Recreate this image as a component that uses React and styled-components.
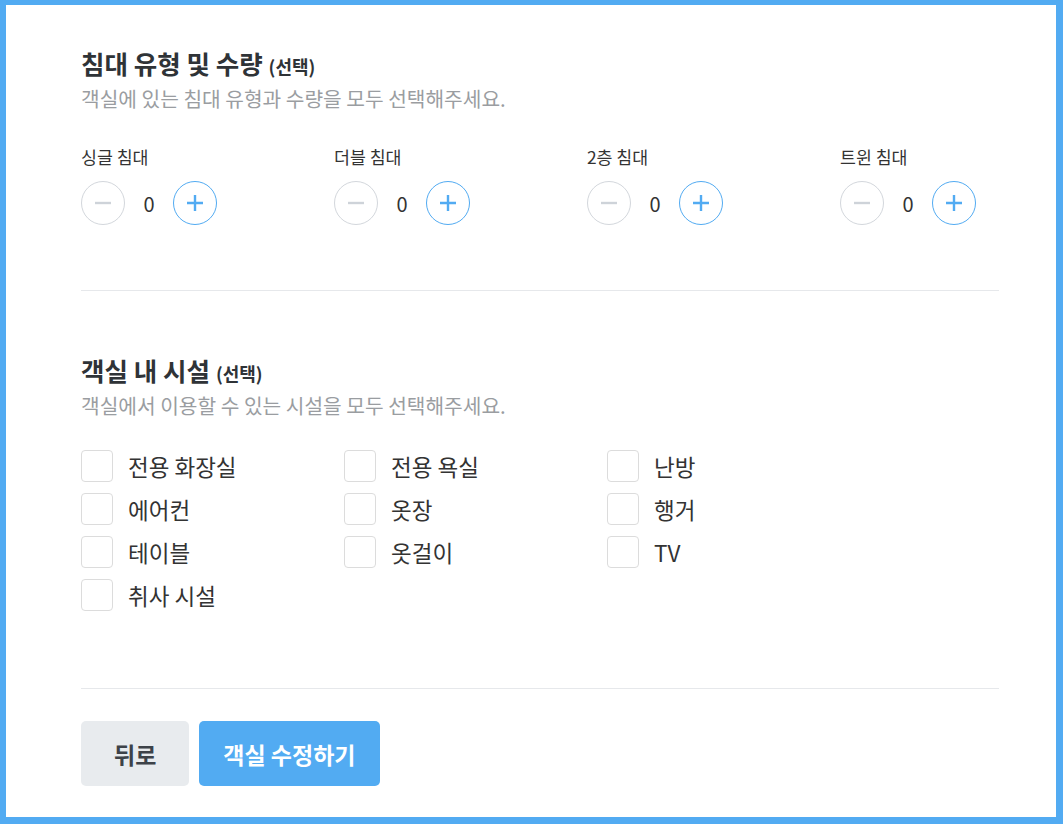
import React from "react"
import styled, { createGlobalStyle } from "styled-components"

const GlobalStyle = createGlobalStyle`
  html, body {
    margin: 0;
    padding: 0;
    background: #52abf2;
  }
  body {
    font-family: "Noto Sans CJK KR", "Noto Sans", sans-serif;
    color: #333;
  }
  * { box-sizing: border-box; }
`

const Frame = styled.div`
  width: 1063px;
  height: 824px;
  padding: 5px 7px 7px 6px;
`

const Card = styled.div`
  height: 100%;
  background: #fff;
  padding: 42px 57px 0 75px;
`

const Section = styled.section`
  display: flex;
  flex-direction: column;
`

const Title = styled.h2`
  margin: 0;
  font-size: 25.5px;
  line-height: 32px;
  font-weight: 700;
  color: #2f3337;
  & > small {
    font-size: 18px;
    font-weight: 700;
    margin-left: 6px;
  }
`

const Subtitle = styled.p`
  margin: 3px 0 0;
  font-size: 20.3px;
  line-height: 26px;
  color: #9a9da1;
`

const BedGrid = styled.div`
  display: grid;
  grid-template-columns: repeat(4, 253px);
  margin-top: 34px;
`

const BedItem = styled.div`
  display: flex;
  flex-direction: column;
  gap: 12px;
`

const BedLabel = styled.div`
  font-size: 17.3px;
  line-height: 24px;
  color: #333;
`

const Counter = styled.div`
  display: flex;
  align-items: center;
`

const RoundButton = styled.button`
  width: 44px;
  height: 44px;
  border-radius: 50%;
  padding: 0;
  background: #fff;
  border: 1px solid ${p => (p.$active ? "#52abf2" : "#d3d7dc")};
  color: ${p => (p.$active ? "#52abf2" : "#ced3d9")};
  display: flex;
  align-items: center;
  justify-content: center;
`

const Count = styled.span`
  width: 48px;
  text-align: center;
  font-size: 20px;
  color: #333;
`

const Divider = styled.hr`
  border: 0;
  border-top: 1px solid #e6e8eb;
  width: 918px;
  margin: ${p => p.$margin};
`

const CheckGrid = styled.div`
  display: grid;
  grid-template-columns: repeat(3, 263px);
  row-gap: 11px;
  margin-top: 32px;
`

const CheckItem = styled.label`
  display: flex;
  align-items: center;
  gap: 15px;
  height: 32px;
`

const Box = styled.span`
  width: 32px;
  height: 32px;
  border: 1px solid #dcdcdc;
  border-radius: 4px;
  background: #fff;
  flex: 0 0 auto;
`

const CheckText = styled.span`
  font-size: 22.5px;
  line-height: 28px;
  color: #333;
`

const Actions = styled.div`
  display: flex;
  gap: 10px;
`

const ActionButton = styled.button`
  height: 65px;
  padding: 0 ${p => p.$pad}px;
  border: 0;
  border-radius: 5px;
  font-family: inherit;
  font-size: 23px;
  font-weight: 700;
  background: ${p => (p.$primary ? "#52abf2" : "#e8ebee")};
  color: ${p => (p.$primary ? "#fff" : "#3d4248")};
`

const Minus = () => (
  <svg width="18" height="18" viewBox="0 0 18 18">
    <path d="M1 9h16" stroke="currentColor" strokeWidth="2.4" />
  </svg>
)

const Plus = () => (
  <svg width="18" height="18" viewBox="0 0 18 18">
    <path d="M1 9h16M9 1v16" stroke="currentColor" strokeWidth="2.4" />
  </svg>
)

const beds = ["싱글 침대", "더블 침대", "2층 침대", "트윈 침대"]
const amenities = [
  "전용 화장실", "전용 욕실", "난방",
  "에어컨", "옷장", "행거",
  "테이블", "옷걸이", "TV",
  "취사 시설",
]

export default function App() {
  return (
    <Frame>
      <GlobalStyle />
      <Card>
        <Section>
          <Title>침대 유형 및 수량<small>(선택)</small></Title>
          <Subtitle>객실에 있는 침대 유형과 수량을 모두 선택해주세요.</Subtitle>
          <BedGrid>
            {beds.map(b => (
              <BedItem key={b}>
                <BedLabel>{b}</BedLabel>
                <Counter>
                  <RoundButton><Minus /></RoundButton>
                  <Count>0</Count>
                  <RoundButton $active><Plus /></RoundButton>
                </Counter>
              </BedItem>
            ))}
          </BedGrid>
        </Section>
        <Divider $margin="65px 0 63px" />
        <Section>
          <Title>객실 내 시설<small>(선택)</small></Title>
          <Subtitle>객실에서 이용할 수 있는 시설을 모두 선택해주세요.</Subtitle>
          <CheckGrid>
            {amenities.map(a => (
              <CheckItem key={a}>
                <Box />
                <CheckText>{a}</CheckText>
              </CheckItem>
            ))}
          </CheckGrid>
        </Section>
        <Divider $margin="77px 0 32px" />
        <Actions>
          <ActionButton $pad={33}>뒤로</ActionButton>
          <ActionButton $primary $pad={24}>객실 수정하기</ActionButton>
        </Actions>
      </Card>
    </Frame>
  )
}
